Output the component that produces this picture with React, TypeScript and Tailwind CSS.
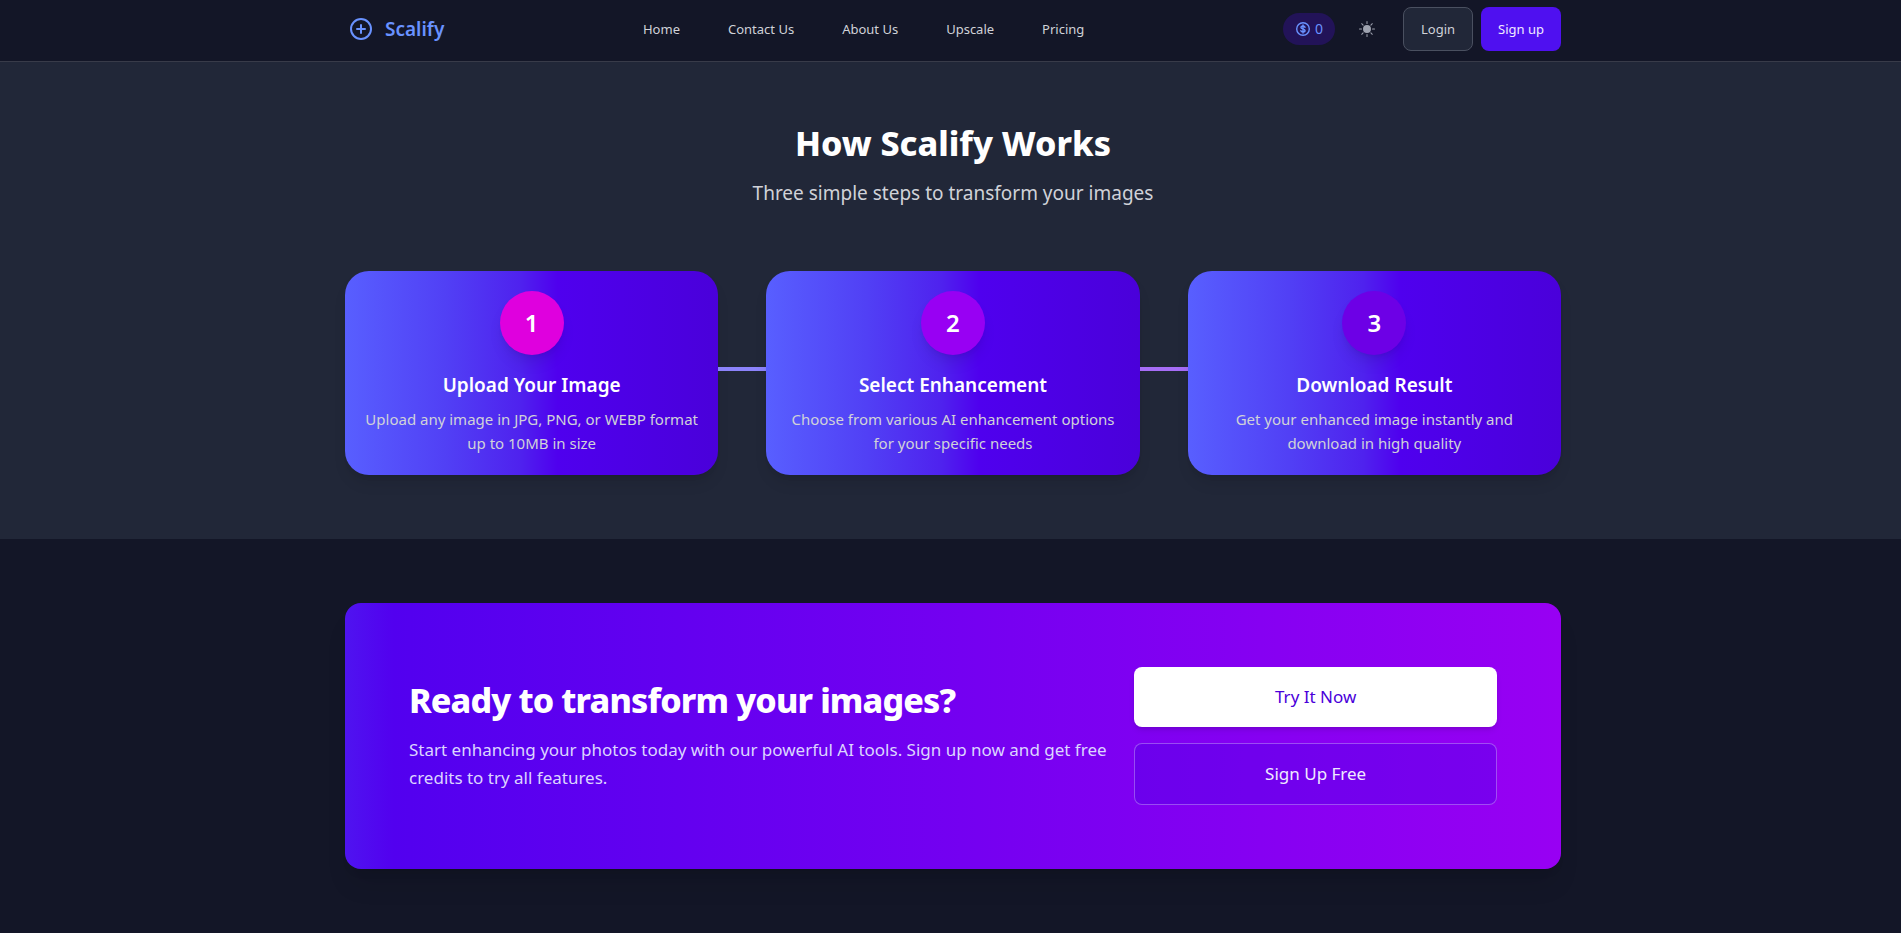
import React from 'react';
import { CirclePlus } from 'lucide-react';
import { BsSunFill } from 'react-icons/bs';

const navLinks = ['Home', 'Contact Us', 'About Us', 'Upscale', 'Pricing'];

const steps = [
    {
        title: 'Upload Your Image',
        description: 'Upload any image in JPG, PNG, or WEBP format up to 10MB in size',
        circle: 'bg-[#df00de]',
        line: 'bg-[#8c83fb]',
    },
    {
        title: 'Select Enhancement',
        description: 'Choose from various AI enhancement options for your specific needs',
        circle: 'bg-[#9800f3]',
        line: 'bg-[#a66df6]',
    },
    {
        title: 'Download Result',
        description: 'Get your enhanced image instantly and download in high quality',
        circle: 'bg-[#6d00e6]',
        line: '',
    },
];

const CoinIcon: React.FC = () => (
    <svg viewBox="0 0 16 16" className="size-4" fill="none" stroke="currentColor" strokeLinecap="round">
        <circle cx="8" cy="8" r="6.3" strokeWidth="1.4" />
        <path d="M10 6.2C9.7 5.4 9 5 8 5 6.900 5 6 5.500 6 6.400 6 8.300 10 7.500 10 9.500 10 10.500 9.100 11 8 11 7 11 6.200 10.600 5.900 9.700M8 4v8" strokeWidth="1.5" />
    </svg>
);

const Navbar: React.FC = () => (
    <header className="bg-[#131627] border-b border-[#383b49]">
        <div className="max-w-[1285px] mx-auto pl-[37px] pr-8 pt-[7px] pb-[10px] flex items-center justify-between">
            <a href="#" className="flex items-center gap-3 pl-1 text-[#6992ff]">
                <CirclePlus className="size-6" />
                <span className="text-[19px] leading-7 font-semibold">Scalify</span>
            </a>

            <nav className="flex gap-12 text-[13px] leading-5 text-[#d0d2d8]">
                {navLinks.map((link) => (
                    <a key={link} href="#">{link}</a>
                ))}
            </nav>

            <div className="flex items-center text-[13px] leading-5">
                <div className="flex items-center gap-1 h-8 px-3 rounded-full bg-[#221358] text-sm text-[#6992ff]">
                    <CoinIcon />
                    <span>0</span>
                </div>
                <button type="button" aria-label="Toggle theme" className="ml-4 mr-5 p-2 text-[#9fa3b0]">
                    <BsSunFill className="size-4" />
                </button>
                <div className="flex gap-2">
                    <button type="button" className="px-[17px] h-11 rounded-lg border border-[#4a5060] bg-[#212738] text-[#d0d2d8]">Login</button>
                    <button type="button" className="px-[17px] h-11 rounded-lg bg-[#4f10f0] text-[#f0eaff]">Sign up</button>
                </div>
            </div>
        </div>
    </header>
);

const HowItWorks: React.FC = () => (
    <section className="bg-[#212738]">
        <div className="max-w-[1285px] mx-auto pl-[37px] pr-8 pt-[61px] pb-16">
            <div className="text-center mb-16">
                <h2 className="text-[34px] leading-10 font-extrabold text-white">How Scalify Works</h2>
                <p className="mt-4 text-[19px] leading-7 text-[#d0d2d8]">Three simple steps to transform your images</p>
            </div>

            <div className="flex items-center">
                {steps.map((step, i) => (
                    <React.Fragment key={step.title}>
                        <div className="flex-1 flex flex-col items-center px-4 py-5 rounded-3xl shadow-lg text-center bg-[linear-gradient(to_right,#585fff,#5140f5_27%,#4f22ee_47%,#4f00ee_57%,#4a00da)]">
                            <div className={`size-16 mb-4 rounded-full shadow-lg flex items-center justify-center text-2xl font-semibold text-white ${step.circle}`}>
                                {i + 1}
                            </div>
                            <h3 className="mb-2 text-[19px] leading-7 font-semibold text-white">{step.title}</h3>
                            <p className="text-[15px] leading-6 text-[#d0d2d8]">{step.description}</p>
                        </div>
                        {step.line && <div className={`w-12 h-1 mb-2 ${step.line}`} />}
                    </React.Fragment>
                ))}
            </div>
        </div>
    </section>
);

const CallToAction: React.FC = () => (
    <section className="max-w-[1285px] mx-auto pl-[37px] pr-8 py-16">
        <div className="flex items-center p-16 rounded-2xl shadow-xl bg-[linear-gradient(to_right,#4f14f0,#5200ef_4%,#9800f3)]">
            <div className="w-2/3">
                <h2 className="text-[34px] leading-10 font-extrabold tracking-tight text-white">Ready to transform your images?</h2>
                <p className="mt-4 text-[17px] leading-7 text-[#dcd5ff]">
                    Start enhancing your photos today with our powerful AI tools. Sign up now and get free credits to try all features.
                </p>
            </div>
            <div className="w-1/3 flex flex-col gap-4 text-[17px] leading-7">
                <button type="button" className="py-4 rounded-lg bg-white shadow-md text-[#4a00da]">Try It Now</button>
                <button type="button" className="py-4 rounded-lg border border-white/30 bg-[#4f00e6]/40 text-[#f0eaff]">Sign Up Free</button>
            </div>
        </div>
    </section>
);

const App: React.FC = () => {
    return (
        <div className="min-h-screen bg-[#131627] font-['Noto_Sans',sans-serif]">
            <Navbar />
            <main>
                <HowItWorks />
                <CallToAction />
            </main>
        </div>
    );
};

export default App;
